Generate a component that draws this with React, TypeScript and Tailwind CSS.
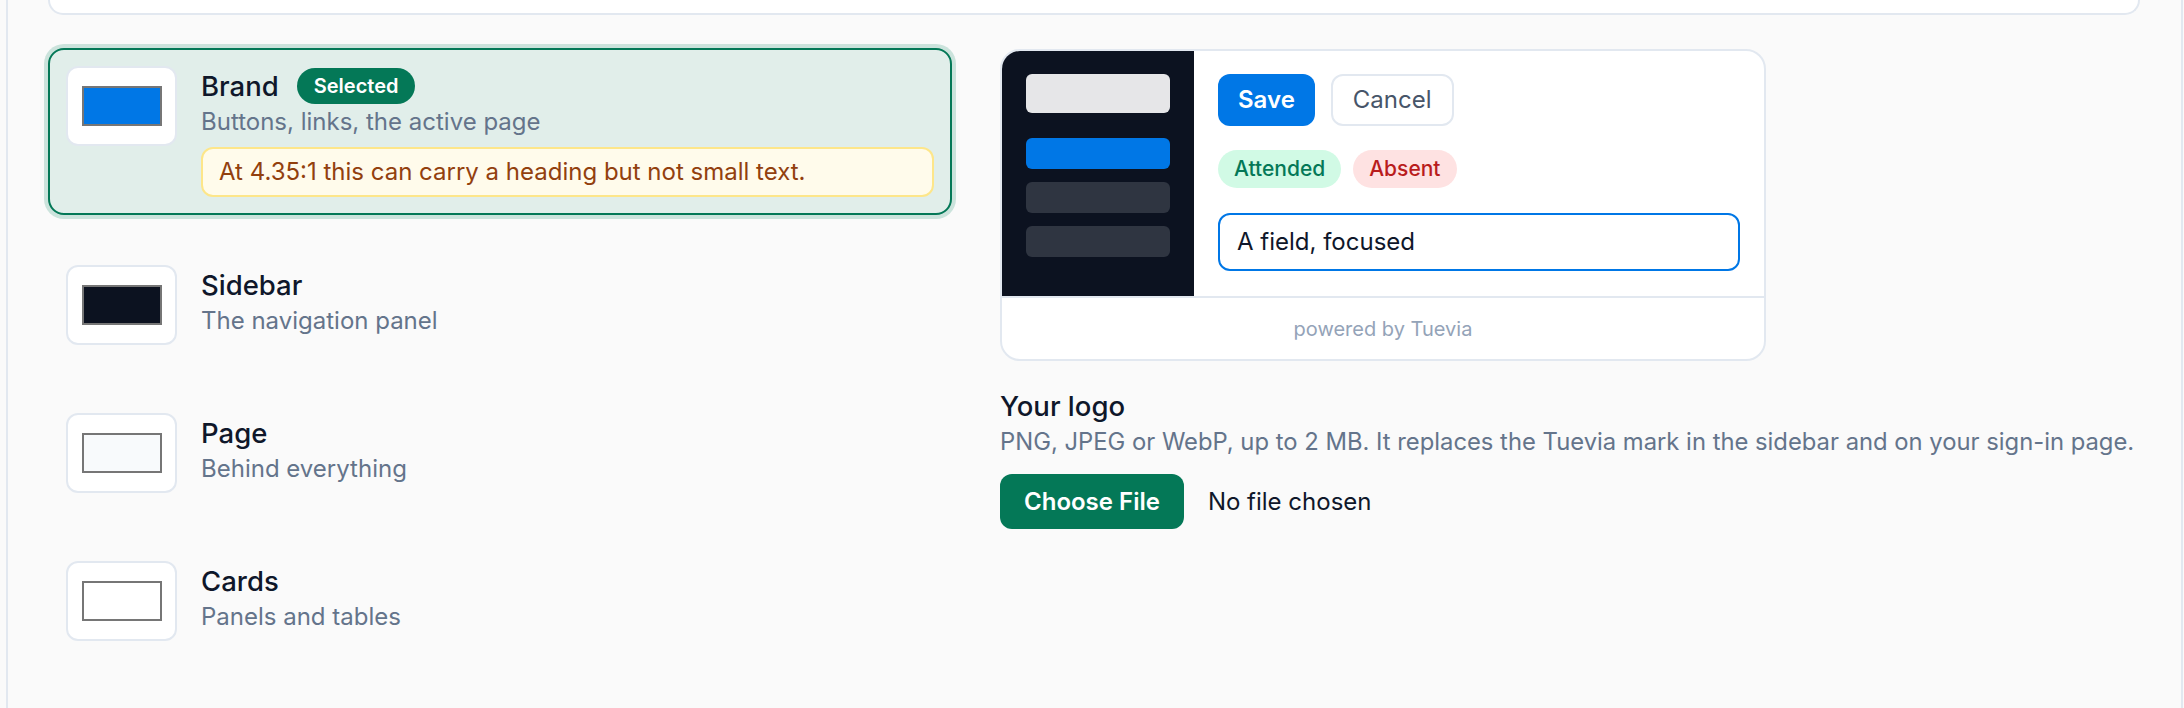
import React from "react";

const font = { fontFamily: "Inter, 'Noto Sans', sans-serif" };

type Swatch = {
  name: string;
  hint: string;
  color: string;
  selected?: boolean;
  warning?: string;
};

const swatches: Swatch[] = [
  {
    name: "Brand",
    hint: "Buttons, links, the active page",
    color: "bg-[#0077e6]",
    selected: true,
    warning: "At 4.35:1 this can carry a heading but not small text.",
  },
  { name: "Sidebar", hint: "The navigation panel", color: "bg-[#0c1220]" },
  { name: "Page", hint: "Behind everything", color: "bg-[#f8fafc]" },
  { name: "Cards", hint: "Panels and tables", color: "bg-white" },
];

function SwatchRow({ s }: { s: Swatch }) {
  return (
    <div
      className={
        s.selected
          ? "flex items-start gap-6 rounded-2xl border-2 border-[#047857] bg-[#e1eeea] p-4 shadow-[0_0_0_4px_#cbe3dc]"
          : "flex items-start gap-6 rounded-2xl border-2 border-transparent p-4"
      }
    >
      <div className="flex h-[80px] w-[111px] shrink-0 items-center justify-center rounded-xl border-2 border-[#e2e8f0] bg-white">
        <span className={`block h-[40px] w-[80px] border-2 border-[#767676] ${s.color}`} />
      </div>
      <div className="min-w-0 flex-1">
        <div className="flex h-[40px] items-center gap-[18px]">
          <span className="text-[27.5px] font-medium leading-[40px] text-[#0f172a]">{s.name}</span>
          {s.selected && (
            <span className="flex h-[36px] items-center rounded-full bg-[#047857] px-[17px] text-[20px] font-semibold text-white">
              Selected
            </span>
          )}
        </div>
        <p className="text-[24px] leading-[31px] text-[#64748b]">{s.hint}</p>
        {s.warning && (
          <div className="mt-[10px] rounded-xl border-2 border-[#fde68a] bg-[#fffbeb] px-4 py-2 text-[24px] leading-[30px] text-[#92400e]">
            {s.warning}
          </div>
        )}
      </div>
    </div>
  );
}

function Preview() {
  return (
    <div className="flex h-[312px] w-[766px] flex-col overflow-hidden rounded-[20px] border-2 border-[#e2e8f0] bg-white">
      <div className="flex flex-1">
        {/* mini sidebar */}
        <div className="flex w-[192px] flex-col bg-[#0c1220] px-6 pt-[23px]">
          <div className="h-[39px] rounded-md bg-[#e6e6e8]" />
          <div className="mt-[25px] flex flex-col gap-[13px]">
            <div className="h-[31px] rounded-md bg-[#0077e6]" />
            <div className="h-[31px] rounded-md bg-[#2f3541]" />
            <div className="h-[31px] rounded-md bg-[#2f3541]" />
          </div>
        </div>
        {/* sample controls */}
        <div className="flex-1 px-6 pb-[25px] pt-[23px]">
          <div className="flex gap-4">
            <button className="h-[52px] rounded-xl bg-[#0077e6] px-5 text-[24px] font-semibold text-white">Save</button>
            <button className="h-[52px] rounded-xl border-2 border-[#e2e8f0] bg-white px-5 text-[24px] text-[#475569]">
              Cancel
            </button>
          </div>
          <div className="mt-6 flex gap-3">
            <span className="flex h-[38px] items-center rounded-full bg-[#d1fae5] px-4 text-[21px] font-medium text-[#047857]">
              Attended
            </span>
            <span className="flex h-[38px] items-center rounded-full bg-[#fee2e2] px-4 text-[21px] font-medium text-[#b91c1c]">
              Absent
            </span>
          </div>
          <div className="mt-[25px] flex h-[58px] items-center rounded-xl border-2 border-[#0077e6] px-[17px] text-[24px] text-[#0f172a]">
            A field, focused
          </div>
        </div>
      </div>
      <div className="flex h-[63px] items-center justify-center border-t-2 border-[#e2e8f0] text-[20px] text-[#94a3b8]">
        powered by Tuevia
      </div>
    </div>
  );
}

export default function App() {
  return (
    <div className="h-[708px] overflow-hidden bg-[#fafafa] pl-[6px] pr-[1px]" style={font}>
      <div className="h-full border-x-2 border-[#e2e8f0] pl-[40px] pr-[41px]">
        <div className="h-[15px] rounded-b-2xl border-2 border-t-0 border-[#e2e8f0] bg-white" />
        <div className="mt-[33px] flex gap-12">
          <div className="flex w-[904px] shrink-0 flex-col gap-8">
            {swatches.map((s) => (
              <SwatchRow key={s.name} s={s} />
            ))}
          </div>
          <div className="min-w-0 flex-1 pt-px">
            <Preview />
            <h3 className="mt-[25px] text-[27.5px] font-medium leading-[40px] text-[#0f172a]">Your logo</h3>
            <p className="whitespace-nowrap text-[23.8px] leading-[31px] text-[#64748b]">
              PNG, JPEG or WebP, up to 2 MB. It replaces the Tuevia mark in the sidebar and on your sign-in page.
            </p>
            <div className="mt-[17px] flex items-center gap-6">
              <span className="flex h-[55px] items-center rounded-xl bg-[#047857] px-6 text-[24px] font-semibold text-white">
                Choose File
              </span>
              <span className="text-[24px] text-[#0f172a]">No file chosen</span>
            </div>
          </div>
        </div>
      </div>
    </div>
  );
}
